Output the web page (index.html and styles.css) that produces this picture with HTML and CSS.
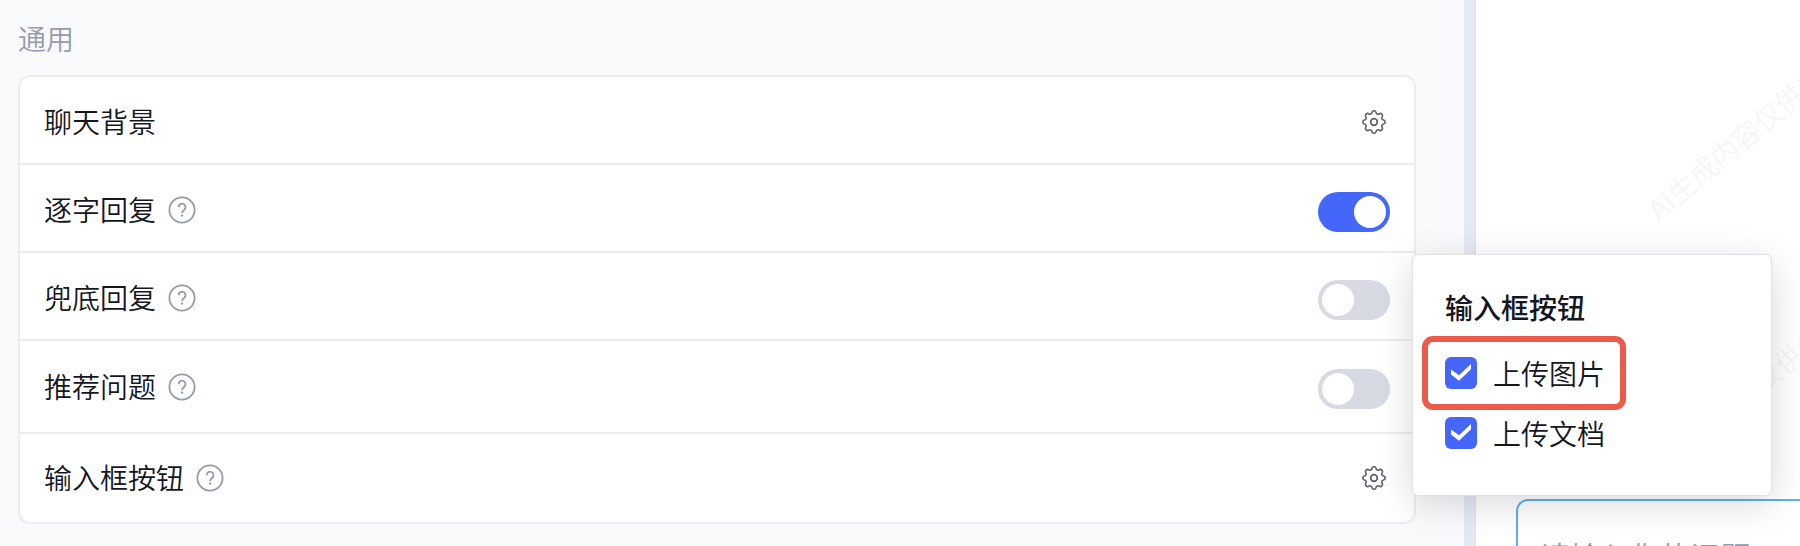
FILE: index.html
```html
<!DOCTYPE html>
<html lang="zh-CN">
<head>
<meta charset="utf-8">
<title>通用</title>
<link rel="stylesheet" href="styles.css">
</head>
<body>
<svg class="sprite" aria-hidden="true">
  <symbol id="help" viewBox="0 0 28 28">
    <circle cx="14" cy="14" r="12.6" fill="none" stroke="currentColor" stroke-width="1.8"/>
    <path d="M10.7 11.2a3.4 3.4 0 1 1 5.6 2.5c-1.3 1.1-2.2 1.7-2.2 3.5" fill="none" stroke="currentColor" stroke-width="1.8"/>
    <circle cx="14.1" cy="19.6" r="1.2" fill="currentColor"/>
  </symbol>
  <symbol id="gear" viewBox="0 0 32 32">
    <path d="M13.96 6.41A2.1 2.1 0 0 1 18.04 6.41A2 2 0 0 0 21.34 7.78A2.1 2.1 0 0 1 24.22 10.66A2 2 0 0 0 25.59 13.96A2.1 2.1 0 0 1 25.59 18.04A2 2 0 0 0 24.22 21.34A2.1 2.1 0 0 1 21.34 24.22A2 2 0 0 0 18.04 25.59A2.1 2.1 0 0 1 13.96 25.59A2 2 0 0 0 10.66 24.22A2.1 2.1 0 0 1 7.78 21.34A2 2 0 0 0 6.41 18.04A2.1 2.1 0 0 1 6.41 13.96A2 2 0 0 0 7.78 10.66A2.1 2.1 0 0 1 10.66 7.78A2 2 0 0 0 13.96 6.41Z" fill="none" stroke="currentColor" stroke-width="1.6" stroke-linejoin="round"/>
    <circle cx="16" cy="16" r="3.3" fill="none" stroke="currentColor" stroke-width="1.7"/>
  </symbol>
</svg>
<div class="layout">
  <main class="settings">
    <h2 class="section-title">通用</h2>
    <div class="card">
      <div class="row">
        <span class="name">聊天背景</span>
        <button class="icon-button gear" type="button" aria-label="设置聊天背景"><svg><use href="#gear"/></svg></button>
      </div>
      <div class="row">
        <label class="name" for="stream">逐字回复</label>
        <button class="icon-button help" type="button" aria-label="说明"><svg><use href="#help"/></svg></button>
        <input class="switch" id="stream" type="checkbox" role="switch" checked>
      </div>
      <div class="row">
        <label class="name" for="fallback">兜底回复</label>
        <button class="icon-button help" type="button" aria-label="说明"><svg><use href="#help"/></svg></button>
        <input class="switch" id="fallback" type="checkbox" role="switch">
      </div>
      <div class="row row-tall">
        <label class="name" for="suggest">推荐问题</label>
        <button class="icon-button help" type="button" aria-label="说明"><svg><use href="#help"/></svg></button>
        <input class="switch" id="suggest" type="checkbox" role="switch">
      </div>
      <div class="row row-last">
        <span class="name">输入框按钮</span>
        <button class="icon-button help" type="button" aria-label="说明"><svg><use href="#help"/></svg></button>
        <button class="icon-button gear" type="button" aria-label="设置输入框按钮"><svg><use href="#gear"/></svg></button>
        <div class="popover">
          <h3 class="popover-title">输入框按钮</h3>
          <label class="option option-marked"><span class="tick"><input type="checkbox" checked><svg viewBox="0 0 32 32"><path d="M6 12.6L14 18.3L26 7V12.2L14 23.7L6 17.4Z"/></svg></span>上传图片</label>
          <label class="option"><span class="tick"><input type="checkbox" checked><svg viewBox="0 0 32 32"><path d="M6 12.6L14 18.3L26 7V12.2L14 23.7L6 17.4Z"/></svg></span>上传文档</label>
        </div>
      </div>
    </div>
  </main>
  <div class="divider"></div>
  <aside class="preview">
    <span class="watermark watermark-upper">AI生成内容仅供参考</span>
    <span class="watermark watermark-lower">AI生成内容仅供参考</span>
    <textarea class="composer" placeholder="请输入你的问题" aria-label="问题"></textarea>
  </aside>
</div>
</body>
</html>
```
FILE: styles.css
```css
* {
  box-sizing: border-box;
}

body {
  margin: 0;
  overflow: hidden;
  background: #fff;
  color: #14171f;
  font: 350 28px/40px "Noto Sans CJK SC", sans-serif;
}

.sprite {
  position: absolute;
  width: 0;
  height: 0;
}

.layout {
  display: grid;
  grid-template-columns: minmax(0, 1fr) 12px 18%;
  height: 100vh;
}

.settings {
  padding: 18px 48px 20px 18px;
  background: #f9fafc;
}

.section-title {
  margin: 0 0 17px;
  color: #969aab;
  font-size: 28px;
  font-weight: 350;
}

.card {
  border: 2px solid #ecedef;
  border-radius: 12px;
  background: #fff;
}

.row {
  display: flex;
  align-items: center;
  gap: 12px;
  min-height: 88px;
  padding: 4px 24px 0;
  border-bottom: 2px solid #ecedef;
}

.row-tall {
  min-height: 93px;
  padding-top: 0;
}

.row-last {
  position: relative;
  padding-top: 0;
  border-bottom: 0;
}

.name {
  padding-bottom: 2px;
}

.icon-button {
  display: flex;
  padding: 0;
  border: 0;
  background: none;
  cursor: pointer;
}

.help {
  color: #969aab;
}

.help svg {
  width: 28px;
  height: 28px;
}

.gear {
  margin-left: auto;
  color: #5b5f70;
}

.gear svg {
  width: 32px;
  height: 32px;
}

.switch {
  appearance: none;
  width: 72px;
  height: 40px;
  margin: 4px 0 0 auto;
  padding: 4px;
  border-radius: 20px;
  background: #d7dae3;
  cursor: pointer;
}

.switch::before {
  content: "";
  display: block;
  width: 32px;
  height: 32px;
  border-radius: 50%;
  background: #fff;
}

.switch:checked {
  background: #4467f9;
}

.switch:checked::before {
  margin-left: auto;
}

.popover {
  position: absolute;
  z-index: 2;
  bottom: 26px;
  left: 100%;
  width: 360px;
  margin-left: -2px;
  padding: 32px;
  border: 1px solid #dfe0e3;
  border-radius: 6px;
  background: #fff;
  box-shadow: 0 8px 36px rgba(0, 0, 0, 0.15);
}

.popover-title {
  margin: 0 0 16px;
  font-size: 28px;
  font-weight: 500;
}

.option {
  position: relative;
  display: flex;
  align-items: center;
  gap: 16px;
  width: max-content;
  height: 60px;
}

.option-marked::before {
  content: "";
  position: absolute;
  inset: -7px -21px -7px -23px;
  border: 6px solid #ec5b49;
  border-radius: 11px;
}

.tick {
  display: grid;
}

.tick input,
.tick svg {
  grid-area: 1 / 1;
  width: 32px;
  height: 32px;
  margin: 0;
}

.tick input {
  appearance: none;
  border-radius: 6px;
  background: #4467f9;
}

.tick svg {
  fill: #fff;
  pointer-events: none;
}

.divider {
  border-right: 1px solid #dde0eb;
  background: #e5e9f3;
}

.preview {
  position: relative;
  display: flex;
  flex-direction: column;
  overflow: hidden;
  padding: 499px 0 0 40px;
}

.composer {
  flex: 1;
  min-height: 0;
  padding: 32px 22px 0;
  overflow: hidden;
  border: 2px solid #5aaff5;
  border-width: 2px 0 0 2px;
  border-radius: 12px 0 0 0;
  background: #fff;
  font: 350 30px/44px "Noto Sans CJK SC", sans-serif;
  resize: none;
}

.composer::placeholder {
  color: #969aab;
}

.watermark {
  position: absolute;
  left: 188px;
  color: #f5f6f8;
  white-space: nowrap;
  transform: rotate(-40deg);
  transform-origin: left bottom;
}

.watermark-upper {
  top: 188px;
}

.watermark-lower {
  top: 448px;
}
```
